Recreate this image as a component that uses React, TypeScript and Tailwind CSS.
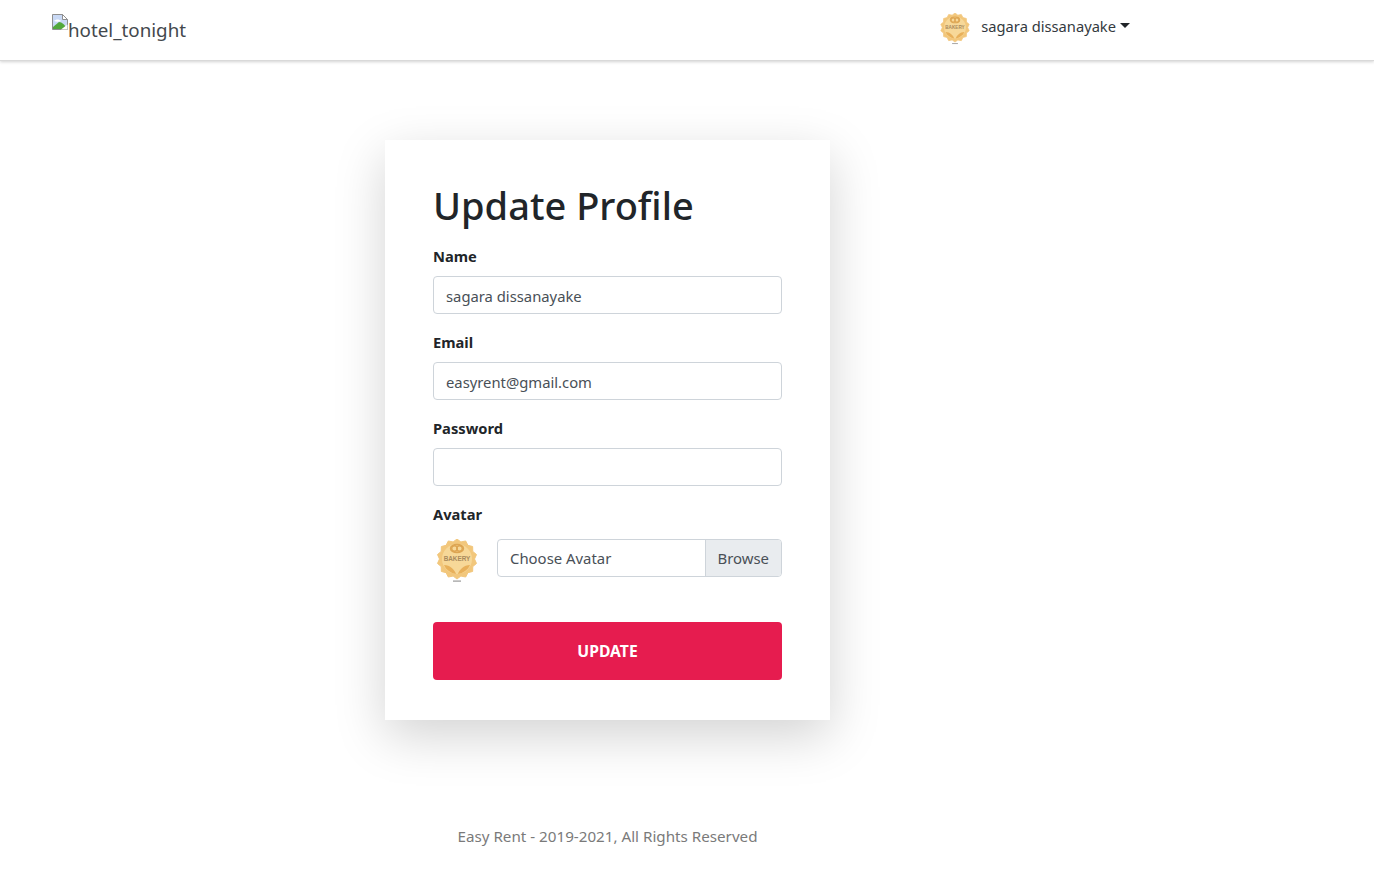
const font = { fontFamily: '"Noto Sans", "Open Sans", sans-serif' };

function scallop(cx: number, cy: number, r1: number, r2: number, n: number) {
  const pts: string[] = [];
  for (let i = 0; i < n * 2; i++) {
    const r = i % 2 === 0 ? r1 : r2;
    const a = (Math.PI * i) / n;
    pts.push(`${(cx + r * Math.sin(a)).toFixed(2)},${(cy - r * Math.cos(a)).toFixed(2)}`);
  }
  return pts.join(" ");
}

function Badge({ size }: { size: number }) {
  return (
    <svg width={size} height={size} viewBox="0 0 40 44" className="shrink-0">
      <polygon points={scallop(20, 20, 20, 17.5, 14)} fill="#f2c77c" stroke="#f2c77c" strokeWidth="1" strokeLinejoin="round" />
      <circle cx="20" cy="20" r="15" fill="#f7d898" />
      <g fill="none" stroke="#dda552" strokeWidth="1.4">
        <circle cx="17.5" cy="9.5" r="2.8" />
        <circle cx="22.5" cy="9.5" r="2.8" />
        <ellipse cx="20" cy="9.5" rx="6.5" ry="4" />
      </g>
      <text x="20" y="21.5" textAnchor="middle" fontSize="6.4" fontWeight="700" fill="#a98a5c" style={{ fontFamily: '"Liberation Sans", sans-serif' }}>BAKERY</text>
      <path d="M7 26c2 5 7 8 12 9-1-4-6-9-12-9zM33 26c-2 5-7 8-12 9 1-4 6-9 12-9z" fill="#e8b05a" />
      <rect x="16" y="41.5" width="8" height="1.2" fill="#9a9a9a" />
    </svg>
  );
}

function Field({ label, value }: { label: string; value: string }) {
  return (
    <div className="mb-4">
      <label className="block h-6 mb-2 text-[14.7px] leading-6 font-bold text-[#212529]">{label}</label>
      <div className="h-[38px] px-3 border border-[#ced4da] rounded bg-white text-[14.8px] leading-[38px] text-[#495057]">{value}</div>
    </div>
  );
}

export default function App() {
  return (
    <div className="min-h-[871px] bg-white text-[#212529]" style={font}>
      <nav className="h-[61px] border-b border-[#d9d9d9] shadow-[0_1px_3px_rgba(0,0,0,0.18)] flex items-start">
        <div className="ml-[52px] mt-[14px] flex items-start text-[18.8px] leading-[32px] text-[#43484d]">
          <svg width="16" height="16" viewBox="0 0 16 16" className="shrink-0">
            <path d="M.5.5h10l5 5v10H.5z" fill="#c9d9f5" stroke="#8f8f8f" />
            <path d="M10.5.5v5h5z" fill="#fff" stroke="#8f8f8f" />
            <path d="M2 7c2-2 5-2 7 0-2 1-5 1-7 0z" fill="#fff" />
            <path d="M1 15V13l6-5c3 0 6 3 8 7z" fill="#52a83c" />
            <path d="M9 15.500l6.500-5v5z" fill="#fff" />
          </svg>
          <span>hotel_tonight</span>
        </div>
        <div className="ml-auto mr-[244px] mt-[13px] flex items-start">
          <Badge size={32} />
          <span className="ml-[10px] mt-[1px] text-[14.7px] leading-6 text-[#343a40]">sagara dissanayake</span>
          <span className="ml-[4px] mt-[10px] w-0 h-0 border-x-[5px] border-x-transparent border-t-[5px] border-t-[#212529]" />
        </div>
      </nav>

      <main className="w-[1215px] flex flex-col items-center">
        <div className="w-[445px] h-[580px] mt-[79px] px-12 pt-[37px] bg-white shadow-[0_16px_48px_rgba(0,0,0,0.175)]">
          <h1 className="text-[38px] leading-[56px] font-medium text-[#212529] mb-[11px]">Update Profile</h1>
          <Field label="Name" value="sagara dissanayake" />
          <Field label="Email" value="easyrent@gmail.com" />
          <Field label="Password" value="" />
          <label className="block h-6 mb-[13px] text-[14.7px] leading-6 font-bold text-[#212529]">Avatar</label>
          <div className="flex items-start">
            <div className="ml-[2px]"><Badge size={44} /></div>
            <div className="ml-[18px] flex-1 h-[38px] flex border border-[#ced4da] rounded overflow-hidden text-[14.9px] leading-[37px] text-[#495057]">
              <span className="flex-1 px-3">Choose Avatar</span>
              <span className="px-3 bg-[#e9ecef] border-l border-[#ced4da]">Browse</span>
            </div>
          </div>
          <button className="mt-[39px] block w-full h-[58px] pt-[2px] rounded bg-[#e61c4f] text-white text-[15.7px] font-bold">UPDATE</button>
        </div>
        <footer className="mt-[104px] text-[15.2px] leading-6 text-[#7a7a7a]">Easy Rent - 2019-2021, All Rights Reserved</footer>
      </main>
    </div>
  );
}
